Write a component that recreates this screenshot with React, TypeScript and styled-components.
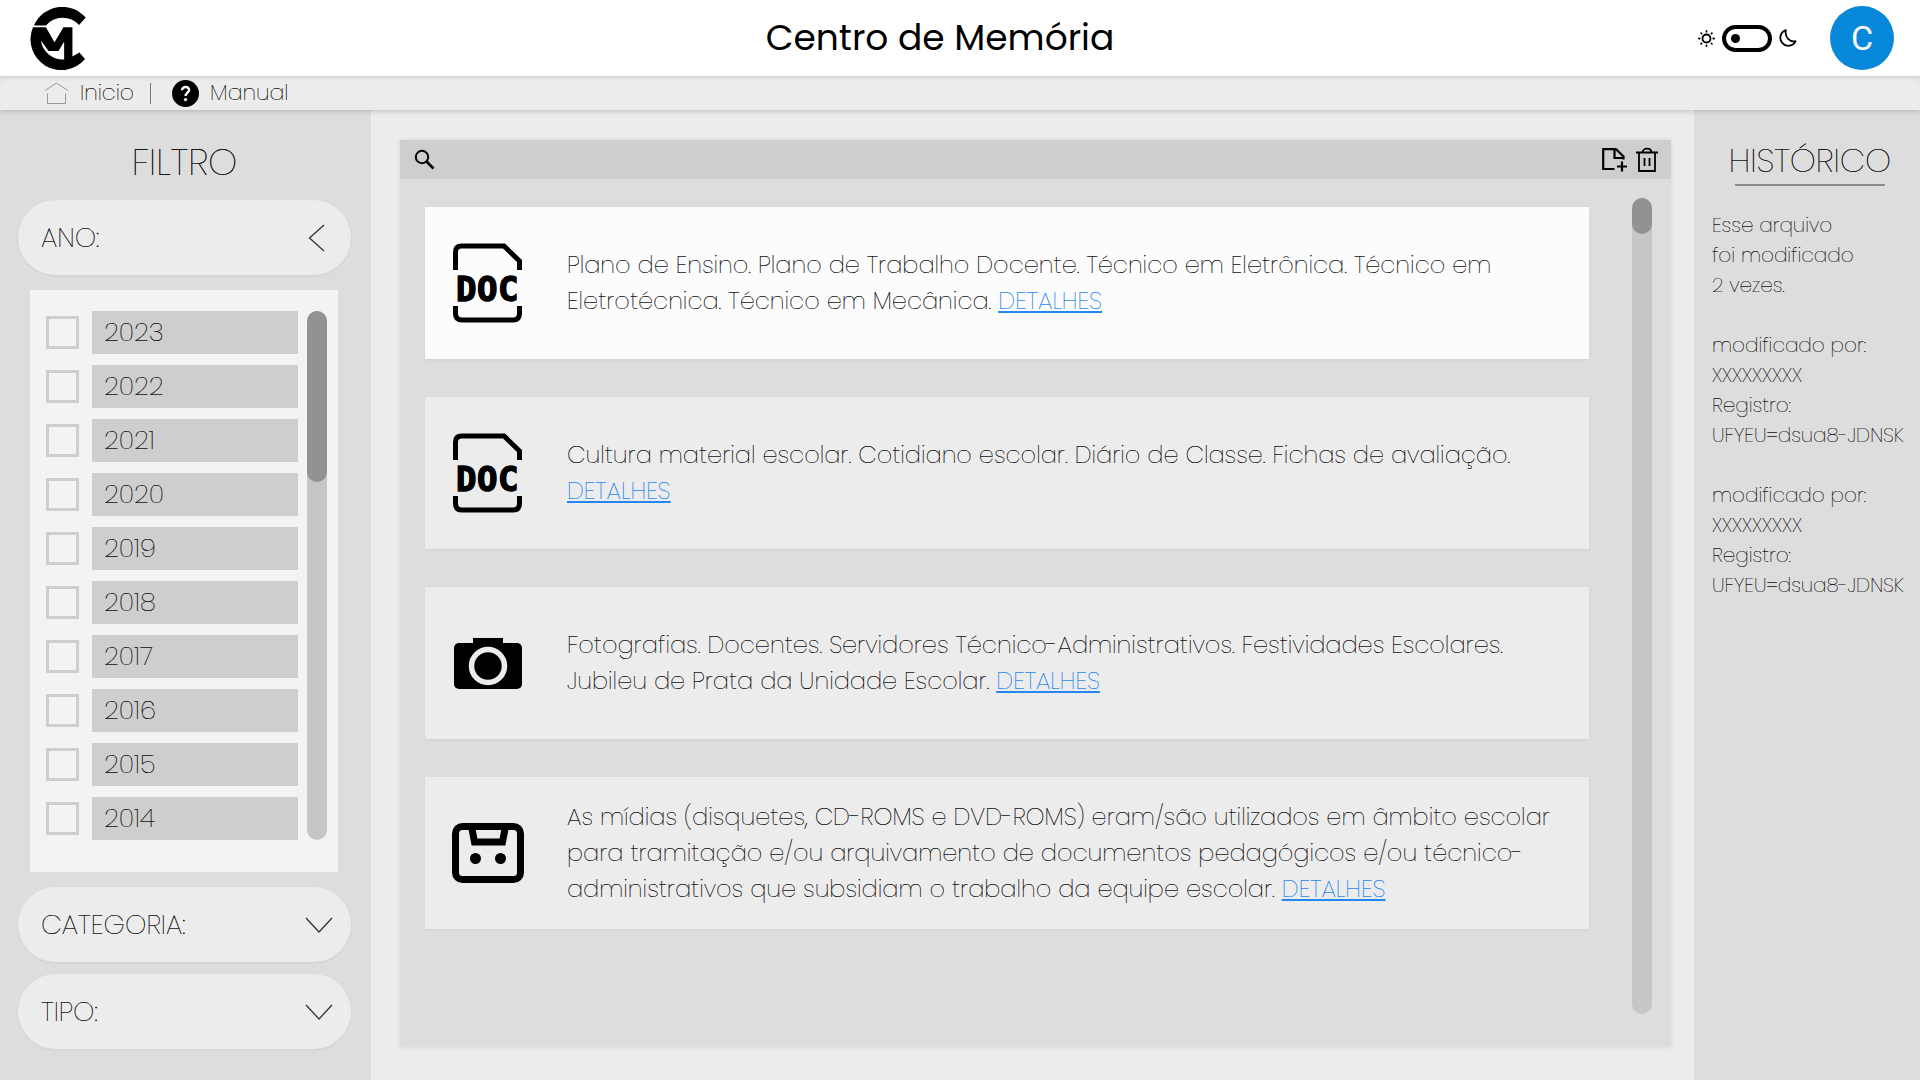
import React, { useState } from "react";
import styled, { createGlobalStyle } from "styled-components";

const c = {
  page: "#ececec",
  panel: "#dddddd",
  bar: "#cecece",
  track: "#c6c6c6",
  thumb: "#929292",
  ink: "#111111",
  link: "#2587f2",
  avatar: "#0788d8",
};

const GlobalStyle = createGlobalStyle`
  *, *::before, *::after { box-sizing: border-box; }
  body {
    margin: 0;
    background: ${c.page};
    color: ${c.ink};
    font-family: Poppins, Inter, "Noto Sans", sans-serif;
    font-weight: 200;
    text-shadow: 0 0 currentColor;
  }
  button, input { font: inherit; color: inherit; text-shadow: inherit; }
  svg { display: block; flex: none; }
`;

const Page = styled.div`
  min-height: 100vh;
  display: flex;
  flex-direction: column;
`;

const Header = styled.header`
  height: 76px;
  padding: 0 26px 0 30px;
  display: grid;
  grid-template-columns: 1fr auto 1fr;
  align-items: center;
  background: #fff;
  text-shadow: none;
`;

const Title = styled.h1`
  margin: 0;
  padding-right: 44px;
  font-size: 36px;
  font-weight: 400;
  line-height: 48px;
  color: #000;
`;

const HeaderTools = styled.div`
  display: flex;
  align-items: center;
  justify-content: flex-end;
`;

const ThemeSwitch = styled.label`
  display: flex;
  align-items: center;
  gap: 7px;
  margin-right: 33px;
`;

const Switch = styled.input`
  appearance: none;
  margin: 0;
  width: 50px;
  height: 27px;
  padding: 0 5px;
  border: 4px solid #000;
  border-radius: 14px;
  display: flex;
  align-items: center;
  cursor: pointer;
  &::before {
    content: "";
    width: 9px;
    height: 9px;
    border-radius: 50%;
    background: #000;
  }
  &:checked { justify-content: flex-end; }
`;

const Avatar = styled.button`
  width: 64px;
  height: 64px;
  padding: 0;
  border: 0;
  border-radius: 50%;
  background: ${c.avatar};
  color: #fff;
  font-family: Roboto, sans-serif;
  font-size: 34px;
  font-weight: 400;
`;

const Nav = styled.nav`
  height: 34px;
  padding-left: 44px;
  display: flex;
  align-items: center;
  gap: 12px;
  background: ${c.page};
  box-shadow: inset 0 4px 4px -2px rgba(0, 0, 0, 0.12), 0 2px 4px rgba(0, 0, 0, 0.15);
  z-index: 1;
`;

const NavLink = styled.a`
  display: flex;
  align-items: center;
  gap: 11px;
  color: ${c.ink};
  font-size: 22px;
  line-height: 30px;
  text-decoration: none;
`;

const Divider = styled.span`
  width: 1px;
  height: 21px;
  margin: 0 9px 0 4px;
  background: #777;
`;

const Body = styled.div`
  flex: 1;
  display: grid;
  grid-template-columns: 371px minmax(0, 1fr) 226px;
`;

const Filter = styled.aside`
  padding: 28px 20px 30px 18px;
  display: flex;
  flex-direction: column;
  background: ${c.panel};
`;

const PanelTitle = styled.h2`
  margin: 0 0 14px;
  font-size: 37px;
  font-weight: 200;
  line-height: 48px;
  text-align: center;
`;

const Pill = styled.button`
  height: 75px;
  padding: 0 18px 0 23px;
  display: flex;
  align-items: center;
  justify-content: space-between;
  border: 0;
  border-radius: 38px;
  background: ${c.page};
  font-size: 27px;
  box-shadow: 0 1px 3px rgba(0, 0, 0, 0.06);
  cursor: pointer;
`;

const FilterGroup = styled.div`
  display: flex;
  flex-direction: column;
  gap: 12px;
`;

const YearBox = styled.div`
  margin: 15px 13px 15px 12px;
  padding: 21px 11px 32px 16px;
  display: flex;
  gap: 9px;
  background: #f3f3f3;
`;

const Years = styled.div`
  flex: 1;
  display: flex;
  flex-direction: column;
  gap: 11px;
`;

const Year = styled.label`
  height: 43px;
  display: flex;
  align-items: center;
  gap: 13px;
`;

const Check = styled.input`
  appearance: none;
  width: 33px;
  height: 33px;
  margin: 0;
  border: 3px solid ${c.bar};
  background: #f3f3f3;
  &:checked { background: ${c.thumb}; }
`;

const YearName = styled.span`
  flex: 1;
  padding-left: 12px;
  background: ${c.bar};
  font-size: 26px;
  line-height: 43px;
`;

const Track = styled.div`
  width: 20px;
  border-radius: 10px;
  background: ${c.track};
`;

const Thumb = styled.div<{ $size: number }>`
  height: ${(p) => p.$size}px;
  border-radius: 10px;
  background: ${c.thumb};
`;

const Main = styled.main`
  padding: 30px 23px 33px 29px;
  display: flex;
`;

const Archive = styled.section`
  flex: 1;
  display: flex;
  flex-direction: column;
  background: ${c.panel};
  box-shadow: 0 0 4px rgba(0, 0, 0, 0.1);
`;

const Toolbar = styled.form`
  height: 39px;
  padding: 0 13px 0 14px;
  display: flex;
  align-items: center;
  gap: 8px;
  background: ${c.bar};
`;

const SearchInput = styled.input`
  flex: 1;
  min-width: 0;
  border: 0;
  outline: 0;
  background: transparent;
  font-size: 20px;
`;

const IconButton = styled.button`
  padding: 0;
  border: 0;
  background: none;
  color: #000;
  cursor: pointer;
`;

const Listing = styled.div`
  flex: 1;
  padding: 19px 19px 33px 25px;
  display: flex;
  gap: 43px;
`;

const Cards = styled.ul`
  flex: 1;
  margin: 0;
  padding: 9px 0 0;
  display: flex;
  flex-direction: column;
  gap: 38px;
  list-style: none;
`;

const Card = styled.li<{ $active?: boolean }>`
  min-height: 152px;
  padding-right: 12px;
  display: flex;
  align-items: center;
  background: ${(p) => (p.$active ? "#fcfcfc" : c.page)};
  box-shadow: 0 1px 3px rgba(0, 0, 0, 0.06);
`;

const CardIcon = styled.div`
  flex: none;
  width: 142px;
  padding-right: 16px;
  display: flex;
  justify-content: center;
`;

const CardText = styled.p`
  margin: 0;
  font-size: 24px;
  line-height: 36px;
`;

const Details = styled.a`
  color: ${c.link};
  text-decoration: underline;
`;

const History = styled.aside`
  padding: 28px 0 28px 18px;
  background: ${c.panel};
`;

const HistoryTitle = styled(PanelTitle)`
  margin: 0 12px 24px 0;
  font-size: 33px;
  line-height: 46px;
  &::after {
    content: "";
    display: block;
    width: 150px;
    height: 2px;
    margin: 0 auto;
    background: #8a8a8a;
  }
`;

const Entry = styled.p`
  margin: 0 0 30px;
  font-size: 20px;
  line-height: 30px;
`;

const Logo = () => (
  <svg width="57" height="63" viewBox="90 16 170 190" role="img" aria-label="CM">
    <path d="M101 72A93 93 0 0 1 257 48L237 70A66 66 0 0 0 137 72Z" />
    <path
      fillRule="evenodd"
      d="M98 77H137L163 122L190 77H217V165L238 153L255 173A93 93 0 0 1 98 77ZM122 117A66 66 0 0 0 192 174V121L175 149H145Z"
    />
  </svg>
);

const Sun = () => (
  <svg width="17" height="17" viewBox="0 0 17 17" fill="none" stroke="#000" strokeWidth="1.8">
    <circle cx="8.5" cy="8.5" r="4" />
    <path strokeLinecap="round" d="M8.500 .9v.8M8.500 15.300v.8M.9 8.500h.8M15.300 8.500h.8M3.100 3.100l.5.5M13.400 13.400l.5.5M3.100 13.900l.5-.5M13.400 3.600l.5-.5" />
  </svg>
);

const Moon = () => (
  <svg width="18" height="18" viewBox="0 0 18 18" fill="none" stroke="#000" strokeWidth="1.8" strokeLinejoin="round">
    <path d="M6.800 1.200A8 8 0 1 0 16.600 12.200C11 13.400 5.500 8.500 6.800 1.200Z" />
  </svg>
);

const Home = () => (
  <svg width="25" height="24" viewBox="0 0 25 24" fill="none" stroke="#999" strokeWidth="1">
    <path d="M1 9.500L12.500 2L24 9.500M3.500 12.500V22.500H21.500V12.500" />
  </svg>
);

const Help = () => (
  <svg width="27" height="27" viewBox="0 0 27 27" fill="none">
    <circle cx="13.500" cy="13.500" r="13.500" fill="#000" />
    <path d="M10 10.200C10.200 5.600 17.600 6 17 10.500C16.600 12.600 13.600 12.900 13.500 16" stroke="#fff" strokeWidth="2.400" />
    <circle cx="13.500" cy="19.600" r="1.600" fill="#fff" />
  </svg>
);

const Chevron = ({ open }: { open?: boolean }) =>
  open ? (
    <svg width="28" height="28" viewBox="0 0 28 28" fill="none" stroke="#333" strokeWidth="1.300">
      <path d="M19 1L4.500 14L19 27" />
    </svg>
  ) : (
    <svg width="28" height="28" viewBox="0 0 28 28" fill="none" stroke="#333" strokeWidth="1.300">
      <path d="M1 7L14 21L27 7" />
    </svg>
  );

const Search = () => (
  <svg width="22" height="22" viewBox="0 0 22 22" fill="none" stroke="currentColor" strokeWidth="2">
    <circle cx="8" cy="8" r="6.200" />
    <path d="M12.500 12.500L19.500 19.500" strokeWidth="2.600" />
  </svg>
);

const AddFile = () => (
  <svg width="27" height="26" viewBox="0 0 27 26" fill="none" stroke="currentColor" strokeWidth="2.200">
    <path d="M13.500 22H2.200V2.200H15L22.500 9.500V12.500M13.500 2.500V11H22.500M21 14.500V24.500M16 19.500H26" />
  </svg>
);

const Trash = () => (
  <svg width="22" height="26" viewBox="0 0 22 26" fill="none" stroke="currentColor" strokeWidth="1.800">
    <path d="M0 5.500H22M6.500 5.500C6.500 .4 15.500 .4 15.500 5.500M3 5.500V24H19V5.500M8.500 11V19M13.500 11V19" />
  </svg>
);

const DocIcon = () => (
  <svg width="70" height="80" viewBox="0 0 70 80" fill="none" stroke="#000" strokeWidth="5">
    <path d="M2.500 27V9Q2.500 3 8.500 3H51L66.500 18V27M2.500 63V70.500Q2.500 77 9 77H60Q66.500 77 66.500 70.500V63" />
    <text
      x="3 24 45"
      y="58"
      fill="#000"
      stroke="#000"
      strokeWidth="1"
      fontFamily='"DejaVu Sans Mono", monospace'
      fontWeight="700"
      fontSize="34"
    >
      DOC
    </text>
  </svg>
);

const CameraIcon = () => (
  <svg width="68" height="51" viewBox="0 0 68 51">
    <rect y="5" width="68" height="46" rx="5" />
    <rect x="19" width="30" height="8" />
    <circle cx="34" cy="28" r="16.500" stroke={c.page} strokeWidth="5.500" />
  </svg>
);

const TapeIcon = () => (
  <svg width="72" height="60" viewBox="0 0 72 60" fill="none" stroke="#000" strokeWidth="7">
    <rect x="3.500" y="3.500" width="65" height="53" rx="7" />
    <path d="M20 6L22.500 19H50.500L53 6" />
    <circle cx="23.500" cy="35.500" r="5.500" fill="#000" stroke="none" />
    <circle cx="48.500" cy="35.500" r="5.500" fill="#000" stroke="none" />
  </svg>
);

const years = [2023, 2022, 2021, 2020, 2019, 2018, 2017, 2016, 2015, 2014];

const records = [
  {
    Icon: DocIcon,
    text: "Plano de Ensino. Plano de Trabalho Docente. Técnico em Eletrônica. Técnico em Eletrotécnica. Técnico em Mecânica.",
  },
  {
    Icon: DocIcon,
    text: "Cultura material escolar. Cotidiano escolar. Diário de Classe. Fichas de avaliação.",
  },
  {
    Icon: CameraIcon,
    text: "Fotografias. Docentes. Servidores Técnico-Administrativos. Festividades Escolares. Jubileu de Prata da Unidade Escolar.",
  },
  {
    Icon: TapeIcon,
    text: "As mídias (disquetes, CD-ROMS e DVD-ROMS) eram/são utilizados em âmbito escolar para tramitação e/ou arquivamento de documentos pedagógicos e/ou técnico-administrativos que subsidiam o trabalho da equipe escolar.",
  },
];

export default function App() {
  const [dark, setDark] = useState(false);
  return (
    <Page>
      <GlobalStyle />
      <Header>
        <Logo />
        <Title>Centro de Memória</Title>
        <HeaderTools>
          <ThemeSwitch>
            <Sun />
            <Switch
              type="checkbox"
              role="switch"
              aria-label="Tema escuro"
              checked={dark}
              onChange={(e) => setDark(e.target.checked)}
            />
            <Moon />
          </ThemeSwitch>
          <Avatar type="button">C</Avatar>
        </HeaderTools>
      </Header>
      <Nav>
        <NavLink href="#inicio">
          <Home />
          Inicio
        </NavLink>
        <Divider />
        <NavLink href="#manual">
          <Help />
          Manual
        </NavLink>
      </Nav>
      <Body>
        <Filter>
          <PanelTitle>FILTRO</PanelTitle>
          <Pill type="button" aria-expanded="true">
            ANO:
            <Chevron open />
          </Pill>
          <YearBox>
            <Years>
              {years.map((y) => (
                <Year key={y}>
                  <Check type="checkbox" />
                  <YearName>{y}</YearName>
                </Year>
              ))}
            </Years>
            <Track>
              <Thumb $size={171} />
            </Track>
          </YearBox>
          <FilterGroup>
            <Pill type="button" aria-expanded="false">
              CATEGORIA:
              <Chevron />
            </Pill>
            <Pill type="button" aria-expanded="false">
              TIPO:
              <Chevron />
            </Pill>
          </FilterGroup>
        </Filter>
        <Main>
          <Archive>
            <Toolbar role="search" onSubmit={(e) => e.preventDefault()}>
              <IconButton type="submit" aria-label="Buscar">
                <Search />
              </IconButton>
              <SearchInput type="text" aria-label="Buscar no acervo" />
              <IconButton type="button" aria-label="Adicionar arquivo">
                <AddFile />
              </IconButton>
              <IconButton type="button" aria-label="Excluir">
                <Trash />
              </IconButton>
            </Toolbar>
            <Listing>
              <Cards>
                {records.map(({ Icon, text }, i) => (
                  <Card key={i} $active={i === 0}>
                    <CardIcon>
                      <Icon />
                    </CardIcon>
                    <CardText>
                      {text} <Details href="#detalhes">DETALHES</Details>
                    </CardText>
                  </Card>
                ))}
              </Cards>
              <Track>
                <Thumb $size={36} />
              </Track>
            </Listing>
          </Archive>
        </Main>
        <History>
          <HistoryTitle>HISTÓRICO</HistoryTitle>
          <Entry>
            Esse arquivo
            <br />
            foi modificado
            <br />2 vezes.
          </Entry>
          {[0, 1].map((i) => (
            <Entry key={i}>
              modificado por:
              <br />
              XXXXXXXXX
              <br />
              Registro:
              <br />
              UFYEU=dsua8-JDNSK
            </Entry>
          ))}
        </History>
      </Body>
    </Page>
  );
}
